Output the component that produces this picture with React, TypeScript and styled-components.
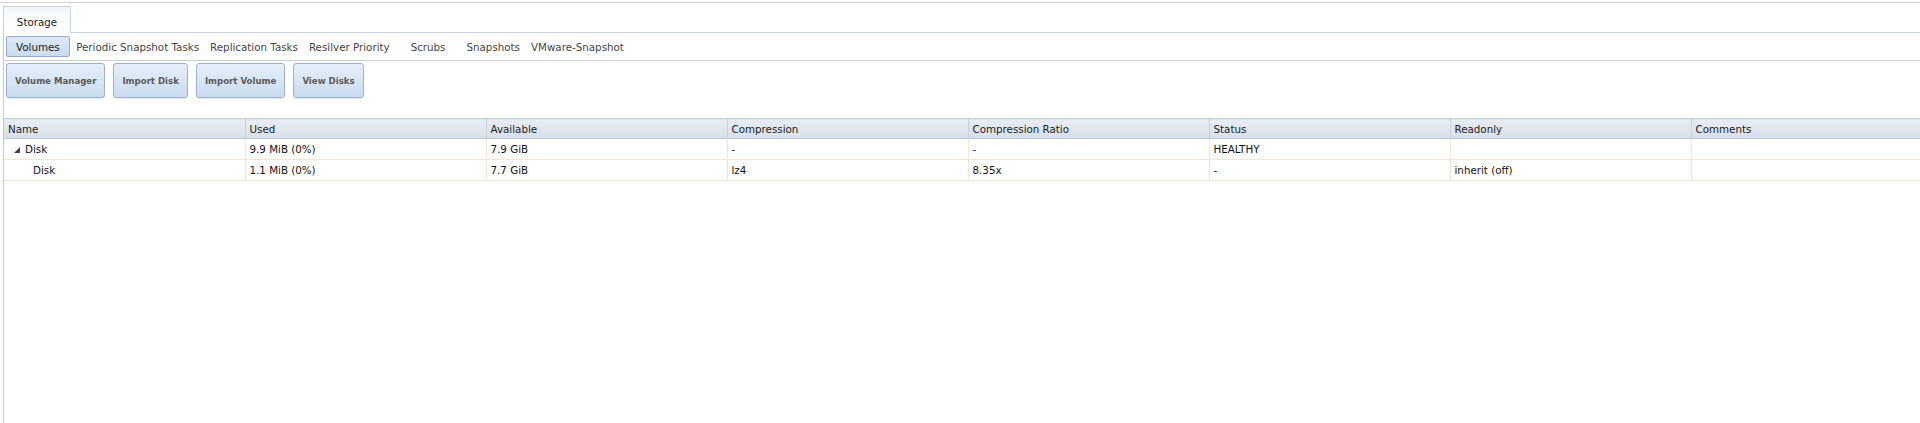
import React from "react";
import styled, { createGlobalStyle } from "styled-components";

const Global = createGlobalStyle`
  html, body { margin: 0; padding: 0; background: #fff; overflow: hidden; }
  body { font-family: "DejaVu Sans", Verdana, sans-serif; width: 1920px; height: 423px; }
`;

const Page = styled.div`
  padding-top: 2px;
  height: 421px;
`;

const TopRule = styled.div`
  height: 1px;
  background: #d2d2d2;
  margin-bottom: 3px;
`;

const Frame = styled.div`
  margin-left: 3px;
  border-left: 1px solid #c3c6cc;
  height: 417px;
`;

const TabBar = styled.div`
  display: flex;
  height: 27px;
  margin-left: -1px;
`;

const Tab = styled.div`
  width: 68px;
  height: 27px;
  box-sizing: border-box;
  border: 1px solid #c8d2de;
  border-bottom: none;
  border-radius: 2px 2px 0 0;
  background: linear-gradient(#f0f5fb, #ffffff 60%);
  display: flex;
  align-items: center;
  justify-content: center;
  padding-top: 4px;
  font-size: 10.3px;
  color: #222;
`;

const TabFill = styled.div`
  flex: 1;
  border-bottom: 1px solid #c8d0da;
`;

const SubNav = styled.div`
  display: flex;
  align-items: center;
  height: 27px;
  border-bottom: 1px solid #cfcfcf;
  padding-left: 2px;
`;

const NavItem = styled.div<{ $active?: boolean; $wide?: boolean }>`
  font-size: 10.3px;
  color: ${(p) => (p.$active ? "#222" : "#444")};
  height: 21px;
  box-sizing: border-box;
  display: flex;
  align-items: center;
  padding: 0 ${(p) => (p.$active ? "9px" : "4.5px")};
  margin-left: ${(p) => (p.$wide ? "10px" : "0")};
  margin-right: ${(p) => (p.$active ? "1px" : "0")};
  border-radius: 2px;
  border: 1px solid ${(p) => (p.$active ? "#92aac6" : "transparent")};
  background: ${(p) => (p.$active ? "linear-gradient(#dce9f7, #cadcf1)" : "transparent")};
`;

const ButtonRow = styled.div`
  display: flex;
  gap: 8px;
  padding: 2px 0 0 2px;
`;

const ActionButton = styled.button`
  height: 35px;
  padding: 0 8px;
  border: 1px solid #98b1cc;
  border-radius: 3px;
  background: linear-gradient(#e6eff9, #cadcef);
  box-shadow: 0 1px 1px rgba(0, 0, 0, 0.08);
  font-family: "DejaVu Sans", Verdana, sans-serif;
  font-weight: bold;
  font-size: 8.6px;
  color: #5a5a5a;
  cursor: pointer;
`;

const Grid = styled.table`
  margin-top: 20px;
  border-collapse: collapse;
  table-layout: fixed;
  width: 1928px;
  font-size: 10.3px;
`;

const HeadCell = styled.th`
  height: 19px;
  padding: 0 4px;
  text-align: left;
  font-weight: normal;
  color: #222;
  background: linear-gradient(#e8edf3, #d6dfe9);
  border-top: 1px solid #c4c7cb;
  border-bottom: 1px solid #b9c5d1;
  border-left: 1px solid #c9d1da;
  &:first-child { border-left: none; }
`;

const Row = styled.tr``;

const Cell = styled.td<{ $indent?: number }>`
  height: 20px;
  padding: 0 4px 0 ${(p) => 4 + (p.$indent || 0)}px;
  color: #111;
  white-space: nowrap;
  border-bottom: 1px solid #f5e4d4;
  border-left: 1px solid #f5e4d4;
  &:first-child { border-left: none; }
`;

const Expander = styled.svg`
  width: 6px;
  height: 6px;
  margin: 0 5px 0 1px;
  vertical-align: 0px;
`;

const columns = [
  "Name",
  "Used",
  "Available",
  "Compression",
  "Compression Ratio",
  "Status",
  "Readonly",
  "Comments",
];

const rows = [
  { name: "Disk", parent: true, used: "9.9 MiB (0%)", avail: "7.9 GiB", comp: "-", ratio: "-", status: "HEALTHY", ro: "", comments: "" },
  { name: "Disk", parent: false, used: "1.1 MiB (0%)", avail: "7.7 GiB", comp: "lz4", ratio: "8.35x", status: "-", ro: "inherit (off)", comments: "" },
];

const navItems = [
  { label: "Volumes", active: true },
  { label: "Periodic Snapshot Tasks" },
  { label: "Replication Tasks" },
  { label: "Resilver Priority" },
  { label: "Scrubs", wide: true },
  { label: "Snapshots", wide: true },
  { label: "VMware-Snapshot" },
];

export default function App() {
  return (
    <>
      <Global />
      <Page>
        <TopRule />
        <Frame>
          <TabBar>
            <Tab>Storage</Tab>
            <TabFill />
          </TabBar>
          <SubNav>
            {navItems.map((n) => (
              <NavItem key={n.label} $active={n.active} $wide={n.wide}>
                {n.label}
              </NavItem>
            ))}
          </SubNav>
          <ButtonRow>
            <ActionButton>Volume Manager</ActionButton>
            <ActionButton>Import Disk</ActionButton>
            <ActionButton>Import Volume</ActionButton>
            <ActionButton>View Disks</ActionButton>
          </ButtonRow>
          <Grid>
            <colgroup>
              {columns.map((c) => (
                <col key={c} style={{ width: 241 }} />
              ))}
            </colgroup>
            <thead>
              <tr>
                {columns.map((c) => (
                  <HeadCell key={c}>{c}</HeadCell>
                ))}
              </tr>
            </thead>
            <tbody>
              {rows.map((r, i) => (
                <Row key={i}>
                  <Cell $indent={r.parent ? 5 : 25}>
                    {r.parent && (
                      <Expander viewBox="0 0 6 6">
                        <path d="M6 0 L6 6 L0 6 Z" fill="#444" />
                      </Expander>
                    )}
                    {r.name}
                  </Cell>
                  <Cell>{r.used}</Cell>
                  <Cell>{r.avail}</Cell>
                  <Cell>{r.comp}</Cell>
                  <Cell>{r.ratio}</Cell>
                  <Cell>{r.status}</Cell>
                  <Cell>{r.ro}</Cell>
                  <Cell>{r.comments}</Cell>
                </Row>
              ))}
            </tbody>
          </Grid>
        </Frame>
      </Page>
    </>
  );
}
